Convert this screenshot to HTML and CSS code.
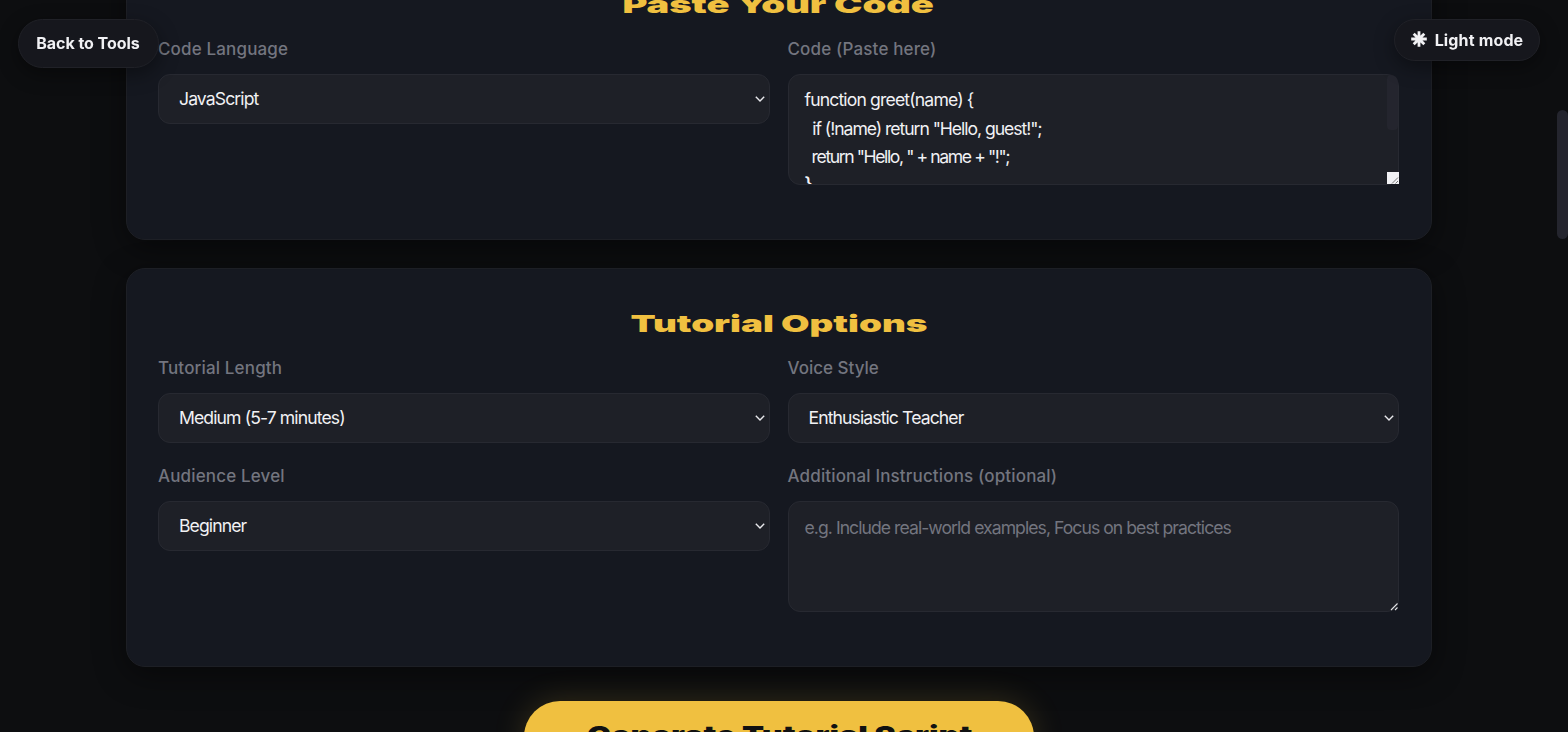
FILE: index.html
```html
<!DOCTYPE html>
<html lang="en">
<head>
    <meta charset="UTF-8">
    <meta name="viewport" content="width=device-width, initial-scale=1.0">
    <title>Code Tutorial Script Generator</title>
    <link rel="stylesheet" href="styles.css">
</head>
<body>
    <a class="back-btn" href="#">Back to Tools</a>
    <button class="theme-toggle" type="button">
        <svg class="theme-icon" viewBox="0 0 16 16" width="16" height="16">
            <path d="M8 0.2V15.8M0.2 8H15.8M2.7 2.7L13.3 13.3M13.3 2.7L2.7 13.3" stroke="currentColor" stroke-width="2.8" fill="none"/>
        </svg>
        <span>Light mode</span>
    </button>

    <main class="container">
        <section class="card">
            <h2 class="card-title"><span class="wide paste-title">Paste Your Code</span></h2>
            <div class="form-grid">
                <div class="form-group">
                    <label class="label" for="language">Code Language</label>
                    <div class="field-wrap">
                        <select class="field" id="language">
                            <option>JavaScript</option>
                        </select>
                        <svg class="chevron" viewBox="0 0 10 6" width="10" height="6"><path d="M0.8 0.7L5 4.9L9.2 0.7"/></svg>
                    </div>
                </div>
                <div class="form-group">
                    <label class="label">Code (Paste here)</label>
                    <div class="field-wrap">
                        <div class="field textarea code-input" role="textbox" aria-multiline="true">
                            <div class="line line-1">function greet(name) {</div>
                            <div class="line line-2">  if (!name) return "Hello, guest!";</div>
                            <div class="line line-3">  return "Hello, " + name + "!";</div>
                            <div class="line line-4">}</div>
                        </div>
                        <span class="scroll-thumb"></span>
                        <svg class="corner" viewBox="0 0 12 12" width="12" height="12">
                            <rect width="12" height="12" fill="#f1f1f4"/>
                            <path d="M5 11.5L11 5.5M8.5 11.5L11 9" stroke="#777" stroke-width="1" fill="none"/>
                        </svg>
                    </div>
                </div>
            </div>
        </section>

        <section class="card">
            <h2 class="card-title"><span class="wide options-title">Tutorial Options</span></h2>
            <div class="form-grid">
                <div class="form-group">
                    <label class="label" for="length">Tutorial Length</label>
                    <div class="field-wrap">
                        <select class="field" id="length">
                            <option>Medium (5-7 minutes)</option>
                        </select>
                        <svg class="chevron" viewBox="0 0 10 6" width="10" height="6"><path d="M0.8 0.7L5 4.9L9.2 0.7"/></svg>
                    </div>
                </div>
                <div class="form-group">
                    <label class="label voice-label" for="voice">Voice Style</label>
                    <div class="field-wrap">
                        <select class="field" id="voice">
                            <option>Enthusiastic Teacher</option>
                        </select>
                        <svg class="chevron" viewBox="0 0 10 6" width="10" height="6"><path d="M0.8 0.7L5 4.9L9.2 0.7"/></svg>
                    </div>
                </div>
                <div class="form-group">
                    <label class="label" for="level">Audience Level</label>
                    <div class="field-wrap">
                        <select class="field" id="level">
                            <option>Beginner</option>
                        </select>
                        <svg class="chevron" viewBox="0 0 10 6" width="10" height="6"><path d="M0.8 0.7L5 4.9L9.2 0.7"/></svg>
                    </div>
                </div>
                <div class="form-group">
                    <label class="label" for="extra">Additional Instructions (optional)</label>
                    <div class="field-wrap">
                        <textarea class="field textarea" id="extra" placeholder="e.g. Include real-world examples, Focus on best practices"></textarea>
                        <svg class="corner" viewBox="0 0 12 12" width="12" height="12">
                            <path d="M4 11L10.5 4.5M8 11L10.5 8.5" stroke="#e4e4e7" stroke-width="1.1" fill="none"/>
                        </svg>
                    </div>
                </div>
            </div>
        </section>

        <button class="generate-btn" type="button"><span class="wide generate-text">Generate Tutorial Script</span></button>
    </main>

    <div class="page-thumb"></div>
</body>
</html>
```

FILE: styles.css
```css
* {
    box-sizing: border-box;
}

body {
    margin: 0;
    height: 100vh;
    overflow: hidden;
    background: #0d0e10;
    color: #f1f1f4;
    font-family: Inter, "Liberation Sans", sans-serif;
}

.container {
    width: 1306px;
    margin: -51px 0 0 126px;
    display: flex;
    flex-direction: column;
    align-items: center;
}

.card {
    width: 100%;
    padding: 31px 32px 31px 31px;
    margin-bottom: 28px;
    background: #151820;
    border: 1px solid #1d1f25;
    border-radius: 19px;
    box-shadow: 0 8px 32px rgba(0, 0, 0, 0.45);
}

.card-title {
    margin: 0 0 8px;
    height: 47px;
    line-height: 47px;
    font-size: 23.5px;
    font-weight: 900;
    color: #f0c040;
    text-align: center;
}

/* extended display lettering */
.wide {
    display: inline-block;
    white-space: nowrap;
}

.paste-title {
    transform: scaleX(1.62);
}

.options-title {
    transform: scaleX(1.565);
}

.generate-text {
    transform: scaleX(1.29);
}

.form-grid {
    display: grid;
    grid-template-columns: 1fr 1fr;
    gap: 20px 18px;
    margin-bottom: 23px;
}

.label {
    display: block;
    height: 27px;
    line-height: 27px;
    margin-bottom: 11px;
    font-size: 17px;
    font-weight: 500;
    letter-spacing: 0.15px;
    color: #73757f;
}

.voice-label {
    letter-spacing: 0;
}

.field {
    display: block;
    width: 100%;
    height: 50px;
    padding: 0 20px 2px;
    background: #1e2027;
    border: 1px solid #272931;
    border-radius: 12px;
    color: #f1f1f4;
    font-family: inherit;
    font-size: 17.6px;
    letter-spacing: -0.9px;
    outline: none;
    appearance: none;
}

.field-wrap {
    position: relative;
}

.textarea {
    height: 111px;
    padding: 12px 16px;
    line-height: 28.5px;
    resize: none;
    overflow: hidden;
}

.textarea::placeholder {
    color: #73757f;
    letter-spacing: -0.95px;
}

.code-input {
    padding-top: 11px;
}

.line {
    white-space: pre;
}

.line-1 {
    letter-spacing: -0.85px;
}

.line-2 {
    letter-spacing: -1.05px;
}

.line-3 {
    letter-spacing: -1.4px;
}

.line-4 {
    margin-top: -2px;
    font-weight: 600;
}

.chevron {
    position: absolute;
    right: 5px;
    top: 22px;
    fill: none;
    stroke: #e8e8ec;
    stroke-width: 1.4;
    pointer-events: none;
}

.corner {
    position: absolute;
    right: 0;
    bottom: 1px;
}

.scroll-thumb {
    position: absolute;
    top: 1px;
    right: 1px;
    width: 11px;
    height: 55px;
    background: #24252e;
    border-radius: 6px 11px 6px 6px;
}

.back-btn,
.theme-toggle {
    position: fixed;
    z-index: 10;
    display: flex;
    align-items: center;
    justify-content: center;
    background: #16171d;
    border: 1px solid #202127;
    border-radius: 25px;
    box-shadow: 0 6px 20px rgba(0, 0, 0, 0.4);
    color: #f1f1f4;
    font-family: inherit;
    font-size: 16px;
    font-weight: 700;
    text-decoration: none;
    white-space: nowrap;
}

.back-btn {
    left: 18px;
    top: 19px;
    width: 141px;
    height: 49px;
    padding: 0 1px 2px 0;
    letter-spacing: -0.05px;
}

.theme-toggle {
    left: 1394px;
    top: 19px;
    width: 146px;
    height: 42px;
    padding: 0;
    gap: 8px;
    letter-spacing: 0.15px;
}

.theme-icon {
    margin-top: -3px;
}

.generate-btn {
    width: 510px;
    height: 72px;
    margin-top: 6px;
    padding: 0 0 4px;
    background: #f0c040;
    border: none;
    border-radius: 36px;
    box-shadow: 0 0 32px rgba(240, 192, 64, 0.18);
    color: #111;
    font-family: inherit;
    font-size: 25px;
    font-weight: 900;
}

.page-thumb {
    position: fixed;
    right: 0;
    top: 110px;
    width: 11px;
    height: 129px;
    background: #24252e;
    border-radius: 6px;
}
```
